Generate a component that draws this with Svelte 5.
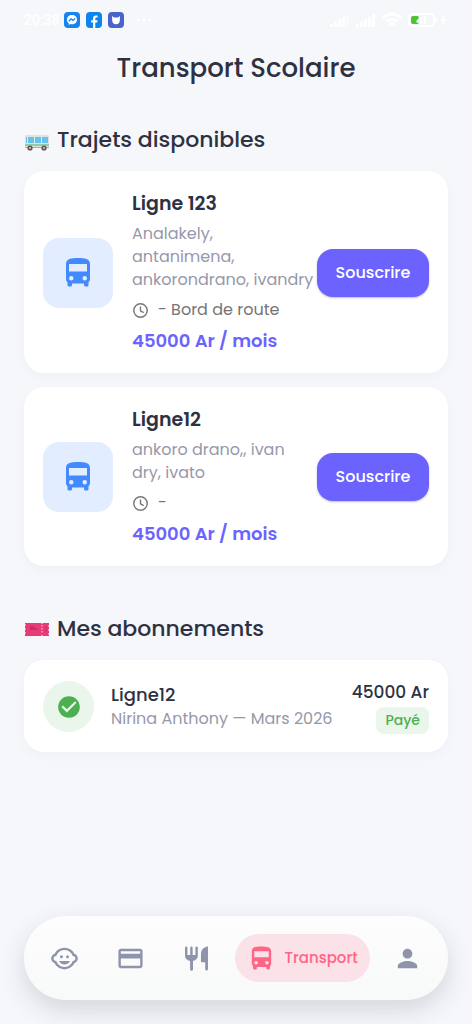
<script>
  const lines = [
    { name: 'Ligne 123', stops: 'Analakely,\nantanimena,\nankorondrano, ivandry', time: '- Bord de route', price: '45000 Ar / mois' },
    { name: 'Ligne12', stops: 'ankoro drano,, ivan\ndry, ivato', time: '-', price: '45000 Ar / mois' }
  ];
  const busPath =
    'M18,11H6V6H18M16.5,17A1.5,1.5 0 0,1 15,15.5A1.5,1.5 0 0,1 16.5,14A1.5,1.5 0 0,1 18,15.5A1.5,1.5 0 0,1 16.5,17M7.5,17A1.5,1.5 0 0,1 6,15.5A1.5,1.5 0 0,1 7.5,14A1.5,1.5 0 0,1 9,15.5A1.5,1.5 0 0,1 7.5,17M4,16C4,16.88 4.39,17.67 5,18.22V20A1,1 0 0,0 6,21H7A1,1 0 0,0 8,20V19H16V20A1,1 0 0,0 17,21H18A1,1 0 0,0 19,20V18.22C19.61,17.67 20,16.88 20,16V6C20,2.5 16.42,2 12,2C7.58,2 4,2.5 4,6V16Z';
</script>

<div class="screen">
  <div class="status">
    <span class="clock">20:38</span>
    <svg class="app" viewBox="0 0 16 16"><rect width="16" height="16" rx="4" fill="#1485ee" /><path d="M8 3C5 3 3 5.100 3 7.700c0 1.500.600 2.700 1.700 3.600V13l1.600-.9c.5.200 1.100.2 1.700.2 3 0 5-2 5-4.600S11 3 8 3z" fill="#fff" /><path d="M4.800 9.300 7.100 6.800 8.900 8.300 11.200 6.600" fill="none" stroke="#1485ee" stroke-width="1.300" /></svg>
    <svg class="app" viewBox="0 0 16 16"><rect width="16" height="16" rx="4" fill="#0b84ee" /><path d="M7 16v-5.500H5.200V8.300H7V6.700C7 4.500 8.200 3.500 10 3.500h1.600v2h-1.100c-.9 0-1.200.4-1.200 1.200v1.600h2.200l-.4 2.200H9.300V16z" fill="#fff" /></svg>
    <svg class="app" viewBox="0 0 16 16"><rect width="16" height="16" rx="4" fill="#4a63cc" /><path d="M4 4l2 1.400h4L12 4l-.2 4.500c0 2.300-1.500 3.700-3.800 3.700s-3.800-1.400-3.800-3.700z" fill="#fff" /></svg>
    <svg class="dots" viewBox="0 0 16 16" fill="#fff"><circle cx="2" cy="8" r="1.500" /><circle cx="8" cy="8" r="1.500" /><circle cx="14" cy="8" r="1.500" /></svg>
    <span class="spacer"></span>
    <svg class="bars" viewBox="0 0 20 16" fill="#fff"><path d="M0 12h3v3H0zM4 10h3v5H4zM8 7h3v8H8zM12 5h3v10h-3z" /><path d="M16 2h3v13h-3z" opacity=".4" /></svg>
    <svg class="bars" viewBox="0 0 20 16" fill="#fff"><path d="M0 12h3v3H0zM4 10h3v5H4zM8 7h3v8H8zM12 5h3v10h-3zM16 2h3v13h-3z" /></svg>
    <svg class="wifi" viewBox="0 0 20 16" fill="none" stroke="#fff" stroke-width="3"><path d="M1 6Q10-2 19 6M4 9.500q6-5 12 0M7 12.500q3-2.500 6 0" /></svg>
    <svg class="battery" viewBox="0 0 40 16"><rect x="1" y="2" width="25" height="12" rx="4" fill="none" stroke="#fff" stroke-width="2" /><rect x="3" y="4" width="8" height="8" rx="2" fill="#52c22b" /><text x="8" y="12" font-size="10" font-weight="700" fill="#fff">41</text><path d="M27 6h2v4h-2zM37 2l-5 7h3l-1 5 5-7h-3z" fill="#fff" /></svg>
  </div>

  <header><h1>Transport Scolaire</h1></header>

  <main>
    <section>
      <h2>
        <svg class="emoji" viewBox="0 0 26 26">
          <path d="M2 8h22q1 0 1 1v12H1V9q0-1 1-1z" fill="#dfe3df" />
          <path d="M2 10h22v6H2z" fill="#67c3ec" />
          <path d="M3 9h1v8H3zM10 9h1v7h-1zM17 9h1v7h-1z" fill="#e6eae7" />
          <path d="M1 17h24v2H1z" fill="#8fcbae" />
          <path d="M1 20h24v1H1z" fill="#b7aba2" />
          <circle cx="6" cy="21" r="2.600" fill="#67534b" /><circle cx="20" cy="21" r="2.600" fill="#67534b" />
          <circle cx="6" cy="21" r="1" fill="#d5cdc9" /><circle cx="20" cy="21" r="1" fill="#d5cdc9" />
        </svg>
        Trajets disponibles
      </h2>
      <ul>
        {#each lines as line}
          <li class="card">
            <span class="tile"><svg viewBox="0 0 24 24" fill="#448aff"><path d={busPath} /></svg></span>
            <div class="info">
              <h3>{line.name}</h3>
              <p class="stops">{line.stops}</p>
              <p class="time">
                <svg viewBox="0 0 24 24" fill="none" stroke="#777" stroke-width="2"><circle cx="12" cy="12" r="9.500" /><path d="M12 6.500V12.500L16.500 15" /></svg>
                {line.time}
              </p>
              <p class="price">{line.price}</p>
            </div>
            <button class="subscribe" type="button">Souscrire</button>
          </li>
        {/each}
      </ul>
    </section>

    <section>
      <h2>
        <svg class="emoji" viewBox="0 0 26 26">
          <path d="M1 7h16l1 1 1-1h6v2l-1 1 1 1v2l-1 1 1 1v2l-1 1 1 1v1h-6l-1-1-1 1H1v-2l1-1-1-1v-2l1-1-1-1v-2l1-1-1-1z" fill="#e93a78" />
          <path d="M6 11h4M6 13h7" stroke="#a6245c" />
          <path d="M18 9v9" stroke="#fbd0e0" stroke-dasharray="1.500 1.500" />
          <path d="M22 10v6" stroke="#c92e6a" />
        </svg>
        Mes abonnements
      </h2>
      <article class="card">
        <span class="round"><svg viewBox="0 0 24 24" fill="#4caf50"><path d="M12 2C6.480 2 2 6.480 2 12s4.480 10 10 10 10-4.480 10-10S17.520 2 12 2zm-2 15l-5-5 1.410-1.410L10 14.170l7.590-7.590L19 8l-9 9z" /></svg></span>
        <div class="who">
          <h3>Ligne12</h3>
          <p>Nirina Anthony — Mars 2026</p>
        </div>
        <div class="paid">
          <strong>45000 Ar</strong>
          <span class="badge">Payé</span>
        </div>
      </article>
    </section>
  </main>

  <nav>
    <a href="#enfants" aria-label="Enfants"><svg viewBox="0 0 24 24"><circle cx="14.500" cy="10.500" r="1.250" /><circle cx="9.500" cy="10.500" r="1.250" /><path d="M22.940 12.660c.04-.21.06-.43.06-.66s-.02-.45-.06-.66c-.25-1.510-1.360-2.740-2.810-3.170-.53-1.120-1.280-2.100-2.190-2.910C16.360 3.850 14.280 3 12 3s-4.360.85-5.940 2.260c-.92.81-1.670 1.800-2.190 2.910-1.450.43-2.560 1.650-2.810 3.170-.04.21-.06.43-.06.66s.02.45.06.66c.25 1.510 1.360 2.740 2.810 3.170.52 1.110 1.270 2.090 2.170 2.890C7.620 20.140 9.710 21 12 21s4.380-.86 5.970-2.280c.9-.8 1.650-1.790 2.170-2.890 1.440-.43 2.550-1.650 2.800-3.170zM19 14c-.1 0-.19-.02-.29-.03-.2.67-.49 1.290-.86 1.860C16.600 17.740 14.450 19 12 19s-4.600-1.260-5.850-3.170c-.37-.57-.66-1.190-.86-1.860-.1.01-.19.03-.29.03-1.100 0-2-.9-2-2s.9-2 2-2c.1 0 .19.02.29.03.2-.67.49-1.290.86-1.860C7.400 6.260 9.550 5 12 5s4.600 1.260 5.850 3.170c.37.57.66 1.190.86 1.860.1-.01.19-.03.29-.03 1.100 0 2 .9 2 2s-.9 2-2 2z" /><path d="M7.500 14c.76 1.770 2.490 3 4.500 3s3.740-1.230 4.500-3h-9z" /></svg></a>
    <a href="#paiements" aria-label="Paiements"><svg viewBox="0 0 24 24"><path d="M20 4H4c-1.110 0-1.990.89-1.990 2L2 18c0 1.110.89 2 2 2h16c1.110 0 2-.89 2-2V6c0-1.110-.89-2-2-2zm0 14H4v-6h16v6zm0-10H4V6h16v2z" /></svg></a>
    <a href="#cantine" aria-label="Cantine"><svg viewBox="0 0 24 24"><path d="M2.500 3a1 1 0 0 1 2 0v6h2.300V3a1 1 0 0 1 2 0v6h2.300V3a1 1 0 0 1 2 0v7c0 2-1.400 3.500-4 4v7a1.200 1.200 0 0 1-2.400 0v-7c-2.800-.5-4.200-2-4.200-4zM21.500 2.600V21a1.200 1.200 0 0 1-2.300 0v-6h-2.700q-.8 0-.8-.8V8q0-4.500 4.800-6 1-.2 1 .6z" /></svg></a>
    <a href="#transport" class="active" aria-current="page"><svg viewBox="0 0 24 24"><path d={busPath} /></svg>Transport</a>
    <a href="#profil" aria-label="Profil"><svg viewBox="0 0 24 24"><path d="M12 12c2.210 0 4-1.790 4-4s-1.790-4-4-4-4 1.790-4 4 1.790 4 4 4zm0 2c-2.670 0-8 1.340-8 4v2h16v-2c0-2.660-5.330-4-8-4z" /></svg></a>
  </nav>
</div>

<style>
  :global(body) { margin: 0; background: #f5f7fb; }
  .screen { min-height: 100vh; box-sizing: border-box; padding: 0 24px 24px; display: flex; flex-direction: column; font-family: Poppins, Inter, sans-serif; color: #2e3142; }
  h1, h2, h3, p, ul { margin: 0; padding: 0; }
  svg { display: block; flex: none; }
  .status { height: 40px; display: flex; align-items: center; gap: 6px; }
  .clock { width: 34px; color: #fff; font: 500 14px/20px Roboto, sans-serif; white-space: nowrap; }
  .app { width: 16px; height: 16px; }
  .dots { width: 16px; height: 16px; margin-left: 6px; }
  .spacer { flex: 1; }
  .bars, .wifi { width: 20px; height: 16px; }
  .battery { width: 40px; height: 16px; }
  header { height: 56px; display: flex; align-items: center; justify-content: center; }
  h1 { font-size: 26px; line-height: 36px; font-weight: 500; }
  main { display: flex; flex-direction: column; gap: 47px; padding-top: 28px; }
  h2 { display: flex; align-items: center; gap: 7px; height: 32px; margin-bottom: 15px; font-size: 22px; line-height: 32px; font-weight: 500; }
  .emoji { width: 26px; height: 26px; }
  ul { list-style: none; display: grid; gap: 14px; }
  .card { display: flex; align-items: center; padding: 19px 19px 18px; border-radius: 20px; background: #fff; box-shadow: 0 4px 12px rgba(40, 45, 80, 0.03); }
  .tile { width: 70px; height: 70px; border-radius: 16px; background: #e2eeff; display: grid; place-items: center; flex: none; margin-right: 19px; }
  .tile svg { width: 36px; height: 36px; }
  .info { flex: 1; min-width: 0; }
  h3 { font-size: 19px; line-height: 28px; font-weight: 600; }
  .stops { margin-top: 4px; font-size: 16px; line-height: 23px; color: #9698aa; white-space: pre; }
  .time { display: flex; align-items: center; gap: 9px; margin-top: 7px; font-size: 16px; line-height: 24px; color: #757575; }
  .time svg { width: 17px; height: 17px; }
  .price { margin-top: 5px; font-size: 18px; line-height: 28px; font-weight: 600; color: #6c63ff; }
  .subscribe { width: 112px; height: 48px; flex: none; border: 0; border-radius: 16px; background: #6c63ff; color: #fff; font: 500 16px/24px Poppins, Inter, sans-serif; padding: 0; box-shadow: 0 1px 2px rgba(40, 40, 80, 0.3); }
  .round { width: 51px; height: 51px; border-radius: 50%; background: #eaf6eb; display: grid; place-items: center; flex: none; margin-right: 17px; }
  .round svg { width: 26px; height: 26px; }
  .who { flex: 1; min-width: 0; }
  .who h3 { font-size: 18px; line-height: 24px; font-weight: 500; }
  .who p { font-size: 16px; line-height: 23px; color: #9698aa; white-space: nowrap; }
  .paid { display: flex; flex-direction: column; align-items: flex-end; gap: 2px; }
  .paid strong { font-size: 17px; line-height: 26px; font-weight: 500; white-space: nowrap; }
  .badge { padding: 2px 9px; border-radius: 8px; background: #eaf6eb; color: #4caf50; font-size: 14px; line-height: 23px; font-weight: 500; }
  nav { margin-top: auto; height: 84px; box-sizing: border-box; padding: 0 12px; border-radius: 42px; display: flex; align-items: center; justify-content: space-between; background: linear-gradient(#fdfdfe, #f8f9f9); box-shadow: 0 10px 26px rgba(40, 45, 60, 0.16); }
  nav a { height: 48px; padding: 0 14px; display: flex; align-items: center; color: #9094aa; text-decoration: none; font-size: 15px; line-height: 24px; font-weight: 500; }
  nav svg { width: 29px; height: 29px; fill: currentColor; }
  nav .active { padding: 0 12px; gap: 9px; border-radius: 24px; background: #fbe1e8; color: #ff6584; }
</style>
